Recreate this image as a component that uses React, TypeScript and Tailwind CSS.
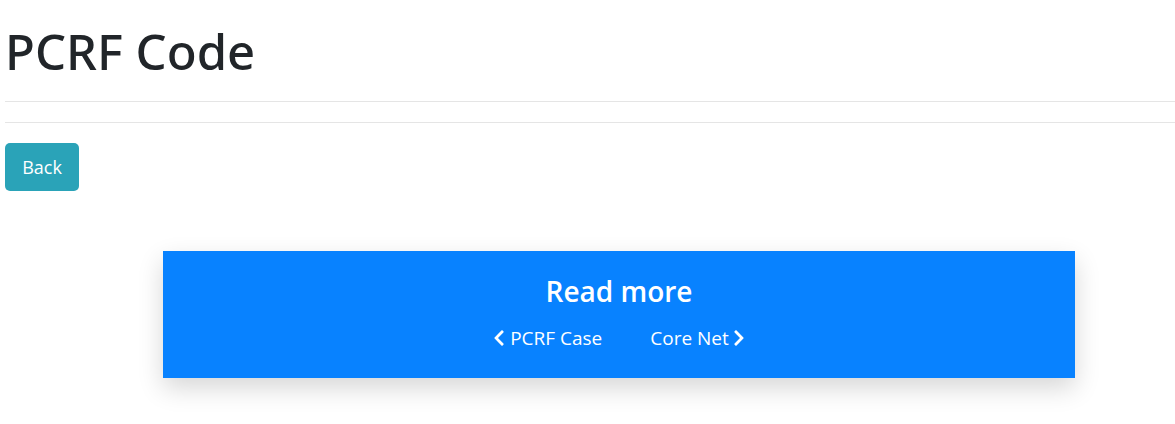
import { FaChevronLeft, FaChevronRight } from "react-icons/fa";

const font = { fontFamily: '"Open Sans", "Noto Sans", sans-serif' };

function ReadMore() {
  return (
    <div className="ml-[158px] w-[912px] bg-[#0882ff] pt-[22px] pb-[26px] text-center text-white shadow-[0_10px_24px_rgba(0,0,0,0.16)]">
      <h2 className="text-[28px] font-semibold leading-[36px]">Read more</h2>
      <div className="mt-[15px] flex items-center justify-center gap-[48px] text-[19px] leading-[28px]">
        <a href="#" className="flex items-center">
          <FaChevronLeft className="h-[18px] w-[12px]" />
          <span className="ml-[5px]">PCRF Case</span>
        </a>
        <a href="#" className="flex items-center">
          <span className="mr-[4px]">Core Net</span>
          <FaChevronRight className="h-[18px] w-[12px]" />
        </a>
      </div>
    </div>
  );
}

export default function App() {
  return (
    <div className="min-h-[424px] bg-white pl-[5px] text-[#212529]" style={font}>
      <h1
        className="pt-[19px] text-[49px] leading-[64px] font-medium"
        style={{ fontFamily: '"Noto Sans", "Open Sans", sans-serif' }}
      >
        PCRF Code
      </h1>
      <hr className="mt-[18px] border-t border-[#e5e5e5]" />
      <hr className="mt-[20px] border-t border-[#e5e5e5]" />
      <button className="mt-[20px] h-[48px] w-[74px] rounded-[5px] bg-[#2aa3b8] text-[18px] text-white">
        Back
      </button>
      <div className="mt-[60px]">
        <ReadMore />
      </div>
    </div>
  );
}
